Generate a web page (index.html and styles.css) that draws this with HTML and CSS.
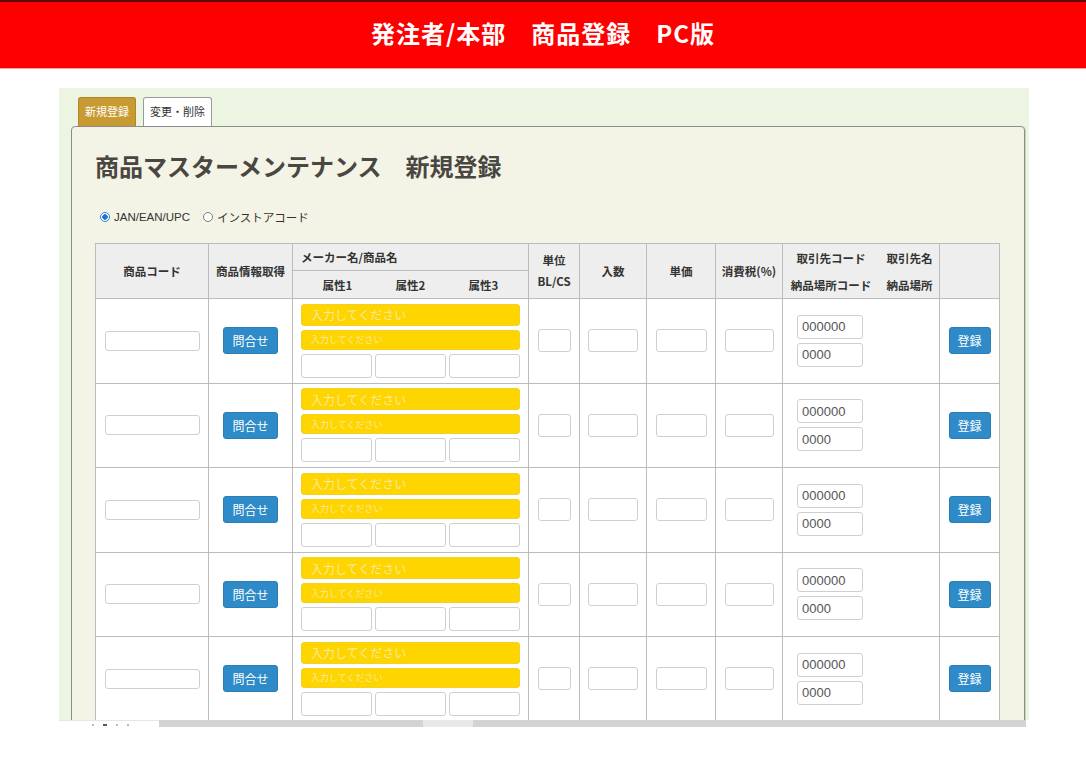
FILE: index.html
```html
<!DOCTYPE html>
<html lang="ja">
<head>
    <meta charset="UTF-8">
    <meta name="viewport" content="width=device-width, initial-scale=1.0">
    <title>発注者/本部 商品登録 PC版</title>
    <link rel="stylesheet" href="styles.css">
</head>
<body>
    <header class="topbar">
        <h1>発注者/本部　商品登録　PC版</h1>
    </header>

    <div class="screen">
        <div class="frame">
            <div class="tabs">
                <span class="tab active">新規登録</span>
                <span class="tab">変更・削除</span>
            </div>
            <div class="panel">
                <h2 class="page-title">商品マスターメンテナンス　新規登録</h2>

                <div class="code-type">
                    <label class="radio-option"><span class="radio checked"></span>JAN/EAN/UPC</label>
                    <label class="radio-option"><span class="radio"></span>インストアコード</label>
                </div>

                <table class="items">
                    <colgroup>
                        <col style="width: 113px">
                        <col style="width: 84px">
                        <col style="width: 236px">
                        <col style="width: 51px">
                        <col style="width: 67px">
                        <col style="width: 69px">
                        <col style="width: 67px">
                        <col style="width: 157px">
                        <col style="width: 60px">
                    </colgroup>
                    <thead>
                        <tr class="head-top">
                            <th rowspan="2">商品コード</th>
                            <th rowspan="2">商品情報取得</th>
                            <th class="maker-head">メーカー名/商品名</th>
                            <th rowspan="2" class="unit-head">単位<br>BL/CS</th>
                            <th rowspan="2">入数</th>
                            <th rowspan="2">単価</th>
                            <th rowspan="2">消費税(%)</th>
                            <th rowspan="2">
                                <div class="supplier-head">
                                    <span>取引先コード</span><span>取引先名</span>
                                    <span>納品場所コード</span><span>納品場所</span>
                                </div>
                            </th>
                            <th rowspan="2"></th>
                        </tr>
                        <tr class="head-sub">
                            <th>
                                <div class="attr-head">
                                    <span>属性1</span><span>属性2</span><span>属性3</span>
                                </div>
                            </th>
                        </tr>
                    </thead>
                    <tbody>
                        <tr>
                            <td><input class="field code-field" type="text"></td>
                            <td><button class="btn btn-query">問合せ</button></td>
                            <td class="name-cell">
                                <input class="field yellow name-field" type="text" placeholder="入力してください">
                                <input class="field yellow sub-field" type="text" placeholder="入力してください">
                                <div class="attr-inputs">
                                    <input class="field" type="text"><input class="field" type="text"><input class="field" type="text">
                                </div>
                            </td>
                            <td><input class="field small-field unit-field" type="text"></td>
                            <td><input class="field small-field num-field" type="text"></td>
                            <td><input class="field small-field price-field" type="text"></td>
                            <td><input class="field small-field tax-field" type="text"></td>
                            <td class="supplier-cell">
                                <input class="field supplier-field" type="text" value="000000">
                                <input class="field supplier-field" type="text" value="0000">
                            </td>
                            <td><button class="btn btn-save">登録</button></td>
                        </tr>
                        <tr>
                            <td><input class="field code-field" type="text"></td>
                            <td><button class="btn btn-query">問合せ</button></td>
                            <td class="name-cell">
                                <input class="field yellow name-field" type="text" placeholder="入力してください">
                                <input class="field yellow sub-field" type="text" placeholder="入力してください">
                                <div class="attr-inputs">
                                    <input class="field" type="text"><input class="field" type="text"><input class="field" type="text">
                                </div>
                            </td>
                            <td><input class="field small-field unit-field" type="text"></td>
                            <td><input class="field small-field num-field" type="text"></td>
                            <td><input class="field small-field price-field" type="text"></td>
                            <td><input class="field small-field tax-field" type="text"></td>
                            <td class="supplier-cell">
                                <input class="field supplier-field" type="text" value="000000">
                                <input class="field supplier-field" type="text" value="0000">
                            </td>
                            <td><button class="btn btn-save">登録</button></td>
                        </tr>
                        <tr>
                            <td><input class="field code-field" type="text"></td>
                            <td><button class="btn btn-query">問合せ</button></td>
                            <td class="name-cell">
                                <input class="field yellow name-field" type="text" placeholder="入力してください">
                                <input class="field yellow sub-field" type="text" placeholder="入力してください">
                                <div class="attr-inputs">
                                    <input class="field" type="text"><input class="field" type="text"><input class="field" type="text">
                                </div>
                            </td>
                            <td><input class="field small-field unit-field" type="text"></td>
                            <td><input class="field small-field num-field" type="text"></td>
                            <td><input class="field small-field price-field" type="text"></td>
                            <td><input class="field small-field tax-field" type="text"></td>
                            <td class="supplier-cell">
                                <input class="field supplier-field" type="text" value="000000">
                                <input class="field supplier-field" type="text" value="0000">
                            </td>
                            <td><button class="btn btn-save">登録</button></td>
                        </tr>
                        <tr>
                            <td><input class="field code-field" type="text"></td>
                            <td><button class="btn btn-query">問合せ</button></td>
                            <td class="name-cell">
                                <input class="field yellow name-field" type="text" placeholder="入力してください">
                                <input class="field yellow sub-field" type="text" placeholder="入力してください">
                                <div class="attr-inputs">
                                    <input class="field" type="text"><input class="field" type="text"><input class="field" type="text">
                                </div>
                            </td>
                            <td><input class="field small-field unit-field" type="text"></td>
                            <td><input class="field small-field num-field" type="text"></td>
                            <td><input class="field small-field price-field" type="text"></td>
                            <td><input class="field small-field tax-field" type="text"></td>
                            <td class="supplier-cell">
                                <input class="field supplier-field" type="text" value="000000">
                                <input class="field supplier-field" type="text" value="0000">
                            </td>
                            <td><button class="btn btn-save">登録</button></td>
                        </tr>
                        <tr>
                            <td><input class="field code-field" type="text"></td>
                            <td><button class="btn btn-query">問合せ</button></td>
                            <td class="name-cell">
                                <input class="field yellow name-field" type="text" placeholder="入力してください">
                                <input class="field yellow sub-field" type="text" placeholder="入力してください">
                                <div class="attr-inputs">
                                    <input class="field" type="text"><input class="field" type="text"><input class="field" type="text">
                                </div>
                            </td>
                            <td><input class="field small-field unit-field" type="text"></td>
                            <td><input class="field small-field num-field" type="text"></td>
                            <td><input class="field small-field price-field" type="text"></td>
                            <td><input class="field small-field tax-field" type="text"></td>
                            <td class="supplier-cell">
                                <input class="field supplier-field" type="text" value="000000">
                                <input class="field supplier-field" type="text" value="0000">
                            </td>
                            <td><button class="btn btn-save">登録</button></td>
                        </tr>
                    </tbody>
                </table>
            </div>
        </div>
        <div class="hscroll">
            <div class="hscroll-start"><span class="dot"></span><span class="dot wide"></span><span class="dot"></span><span class="dot"></span></div>
            <div class="hscroll-track"></div>
            <div class="hscroll-thumb"></div>
            <div class="hscroll-track rest"></div>
        </div>
    </div>
</body>
</html>
```

FILE: styles.css
```css
* {
    box-sizing: border-box;
}

body, h1, h2 {
    margin: 0;
    padding: 0;
}

body {
    font-family: "Liberation Sans", "Noto Sans CJK JP", sans-serif;
    background-color: #ffffff;
}

/* red title bar */
.topbar {
    height: 69px;
    background-color: #ff0000;
    border-top: 2px solid #5c0b0b;
    border-bottom: 1px solid #ff9a9a;
}

.topbar h1 {
    font-family: "Noto Sans CJK JP", sans-serif;
    font-size: 24px;
    font-weight: bold;
    line-height: 62px;
    letter-spacing: 1px;
    color: #ffffff;
    text-align: center;
}

/* embedded app screen */
.screen {
    width: 970px;
    margin: 19px 0 0 59px;
}

.frame {
    height: 632px;
    overflow: hidden;
    background-color: #ecf4e2;
    padding: 9px 4px 0 12px;
}

.tabs {
    display: flex;
    gap: 7px;
    padding-left: 7px;
}

.tab {
    height: 29px;
    padding: 0 6px;
    font-size: 11px;
    line-height: 28px;
    color: #333333;
    background-color: #ffffff;
    border: 1px solid #9a9a9a;
    border-bottom: none;
    border-radius: 3px 3px 0 0;
}

.tab.active {
    color: #ffffff;
    background-color: #c89b32;
    border-color: #b08628;
}

.panel {
    min-height: 620px;
    background-color: #f4f4e6;
    border: 1px solid #8c8c8c;
    border-radius: 4px 4px 0 0;
    box-shadow: 1px 1px 1px rgba(0, 0, 0, 0.15);
    padding: 24px 25px 0 23px;
}

.page-title {
    font-family: "Noto Sans CJK JP", sans-serif;
    font-size: 24px;
    line-height: 30px;
    font-weight: bold;
    color: #4a4742;
}

/* code type radios */
.code-type {
    display: flex;
    align-items: center;
    height: 16px;
    margin-top: 28px;
    padding-left: 5px;
    font-size: 11.5px;
    color: #333333;
}

.radio-option {
    display: flex;
    align-items: center;
    gap: 4px;
    margin-right: 13px;
}

.radio {
    width: 10px;
    height: 10px;
    border: 1px solid #7a7a7a;
    border-radius: 50%;
    background-color: #ffffff;
}

.radio.checked {
    border-color: #2f7fd6;
    background: radial-gradient(circle, #1f74d6 0 2.5px, #ffffff 3px);
}

/* item table */
.items {
    width: 904px;
    margin-top: 18px;
    border-collapse: collapse;
    table-layout: fixed;
    background-color: #ffffff;
}

.items th {
    background-color: #eeeeee;
    border: 1px solid #bcbcbc;
    font-family: "Noto Sans CJK JP", sans-serif;
    font-size: 11.5px;
    font-weight: bold;
    color: #333333;
    padding: 0;
}

.head-top {
    height: 27px;
}

.head-sub {
    height: 28px;
}

.items th.maker-head {
    text-align: left;
    padding-left: 8px;
}

.unit-head {
    line-height: 21px;
}

.attr-head {
    display: grid;
    grid-template-columns: repeat(3, 1fr);
    padding: 0 8px;
}

.supplier-head {
    display: grid;
    grid-template-columns: 96px 61px;
    grid-auto-rows: 27px;
    align-items: center;
}

.items td {
    height: 84.5px;
    border: 1px solid #bcbcbc;
    text-align: center;
    vertical-align: middle;
    padding: 0;
}

.field {
    display: block;
    height: 24px;
    padding: 0 4px;
    border: 1px solid #cfcfcf;
    border-radius: 3px;
    background-color: #ffffff;
    font-family: "Liberation Sans", sans-serif;
    font-size: 13px;
    color: #555555;
    outline: none;
}

.code-field {
    width: 95px;
    height: 20px;
    margin: 0 auto;
}

.small-field {
    height: 23px;
    margin: 0 auto;
}

.unit-field {
    width: 33px;
}

.num-field {
    width: 50px;
}

.price-field {
    width: 51px;
}

.tax-field {
    width: 49px;
}

/* maker / product name inputs */
.items td.name-cell {
    padding: 0 8px;
}

.yellow {
    width: 100%;
    background-color: #ffd500;
    border-color: #f2cf2a;
    font-family: "Noto Sans CJK JP", sans-serif;
}

.yellow::placeholder {
    color: #f7e8a4;
}

.name-field {
    height: 22px;
    padding-left: 9px;
    font-size: 12px;
}

.sub-field {
    height: 20px;
    margin-top: 4px;
    padding-left: 9px;
    font-size: 9px;
}

.attr-inputs {
    display: grid;
    grid-template-columns: repeat(3, 1fr);
    gap: 3px;
    margin-top: 4px;
}

.attr-inputs .field {
    width: 100%;
}

.items td.supplier-cell {
    text-align: left;
    padding-left: 14px;
}

.supplier-field {
    width: 66px;
}

.supplier-field + .supplier-field {
    margin-top: 4px;
}

.btn {
    height: 27px;
    padding: 0;
    border: 1px solid #2a7db5;
    border-radius: 3px;
    background-color: #2e8bc8;
    color: #ffffff;
    font-family: "Noto Sans CJK JP", sans-serif;
    font-size: 12px;
}

.btn-query {
    width: 55px;
}

.btn-save {
    width: 42px;
}

/* horizontal scrollbar under the screen */
.hscroll {
    display: flex;
    width: 967px;
    height: 7px;
}

.hscroll-start {
    display: flex;
    align-items: flex-end;
    gap: 9px;
    width: 100px;
    padding: 0 0 1px 33px;
    border-top: 1px solid #e6e6e6;
}

.dot {
    width: 2px;
    height: 2px;
    background-color: #b8b8c8;
}

.dot.wide {
    width: 4px;
    background-color: #55556a;
}

.hscroll-track {
    width: 264px;
    background-color: #d3d3d3;
}

.hscroll-track.rest {
    flex: 1;
}

.hscroll-thumb {
    width: 50px;
    background-color: #e8e8e8;
}
```
